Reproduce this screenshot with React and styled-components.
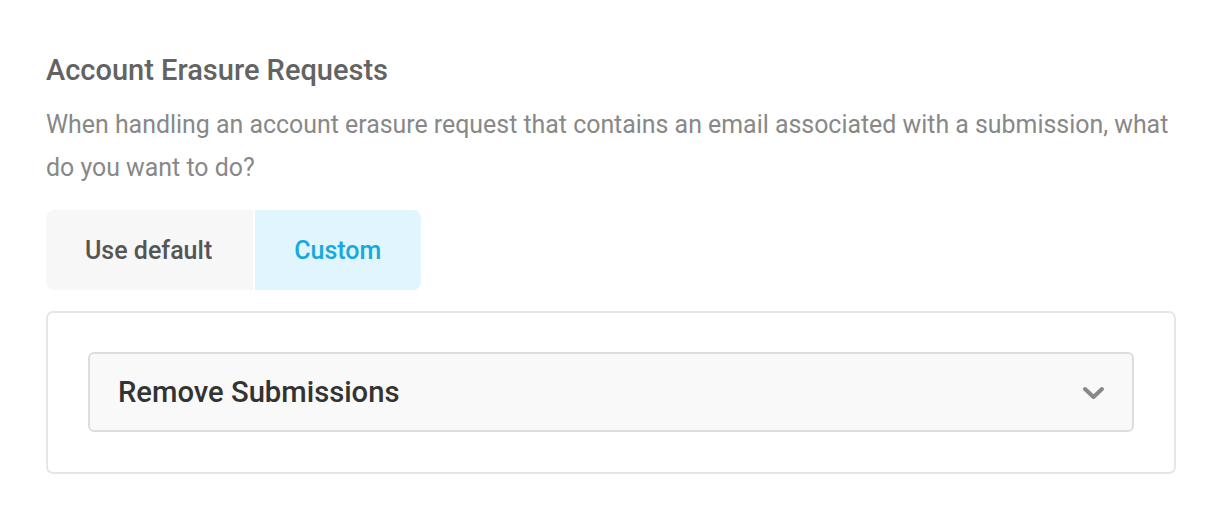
import styled, { createGlobalStyle } from 'styled-components';

const GlobalStyle = createGlobalStyle`
  body {
    margin: 0;
    background: #ffffff;
    font-family: Roboto, "Liberation Sans", sans-serif;
  }
`;

const Page = styled.div`
  padding: 53px 44px 0 46px;
`;

const Title = styled.h2`
  margin: 0;
  font-size: 29px;
  font-weight: 500;
  line-height: 35px;
  color: #636363;
`;

const Description = styled.p`
  margin: 15px -10px 21px 0;
  font-size: 24.9px;
  line-height: 43px;
  color: #888888;
`;

const Toggle = styled.div`
  display: inline-flex;
  gap: 2px;
  border-radius: 8px;
  overflow: hidden;
`;

const ToggleOption = styled.button`
  border: none;
  height: 80px;
  padding: 0 ${(props) => (props.$active ? '40px' : '41px')} 0 39px;
  font-family: inherit;
  font-size: 25px;
  font-weight: 500;
  cursor: pointer;
  background: ${(props) => (props.$active ? '#e1f5fe' : '#f7f7f7')};
  color: ${(props) => (props.$active ? '#17a8e2' : '#555555')};
`;

const Panel = styled.div`
  margin-top: 21px;
  border: 2px solid #e6e6e6;
  border-radius: 7px;
  padding: 39px 40px 40px;
`;

const Select = styled.div`
  display: flex;
  align-items: center;
  justify-content: space-between;
  height: 76px;
  padding: 0 26px 0 28px;
  background: #f9f9f9;
  border: 2px solid #dddddd;
  border-radius: 6px;
  cursor: pointer;
`;

const SelectValue = styled.span`
  font-size: 29.2px;
  font-weight: 500;
  color: #333333;
`;

const Chevron = styled.svg`
  width: 25px;
  height: 16px;
  margin-top: 2px;
  color: #888888;
`;

export default function App() {
  return (
    <>
      <GlobalStyle />
      <Page>
        <Title>Account Erasure Requests</Title>
        <Description>
          When handling an account erasure request that contains an email
          associated with a submission, what do you want to do?
        </Description>
        <Toggle>
          <ToggleOption>Use default</ToggleOption>
          <ToggleOption $active>Custom</ToggleOption>
        </Toggle>
        <Panel>
          <Select>
            <SelectValue>Remove Submissions</SelectValue>
            <Chevron viewBox="0 0 25 16">
              <path
                d="M4 4 L12.5 12 L21 4"
                fill="none"
                stroke="currentColor"
                strokeWidth="4"
                strokeLinecap="round"
                strokeLinejoin="round"
              />
            </Chevron>
          </Select>
        </Panel>
      </Page>
    </>
  );
}
